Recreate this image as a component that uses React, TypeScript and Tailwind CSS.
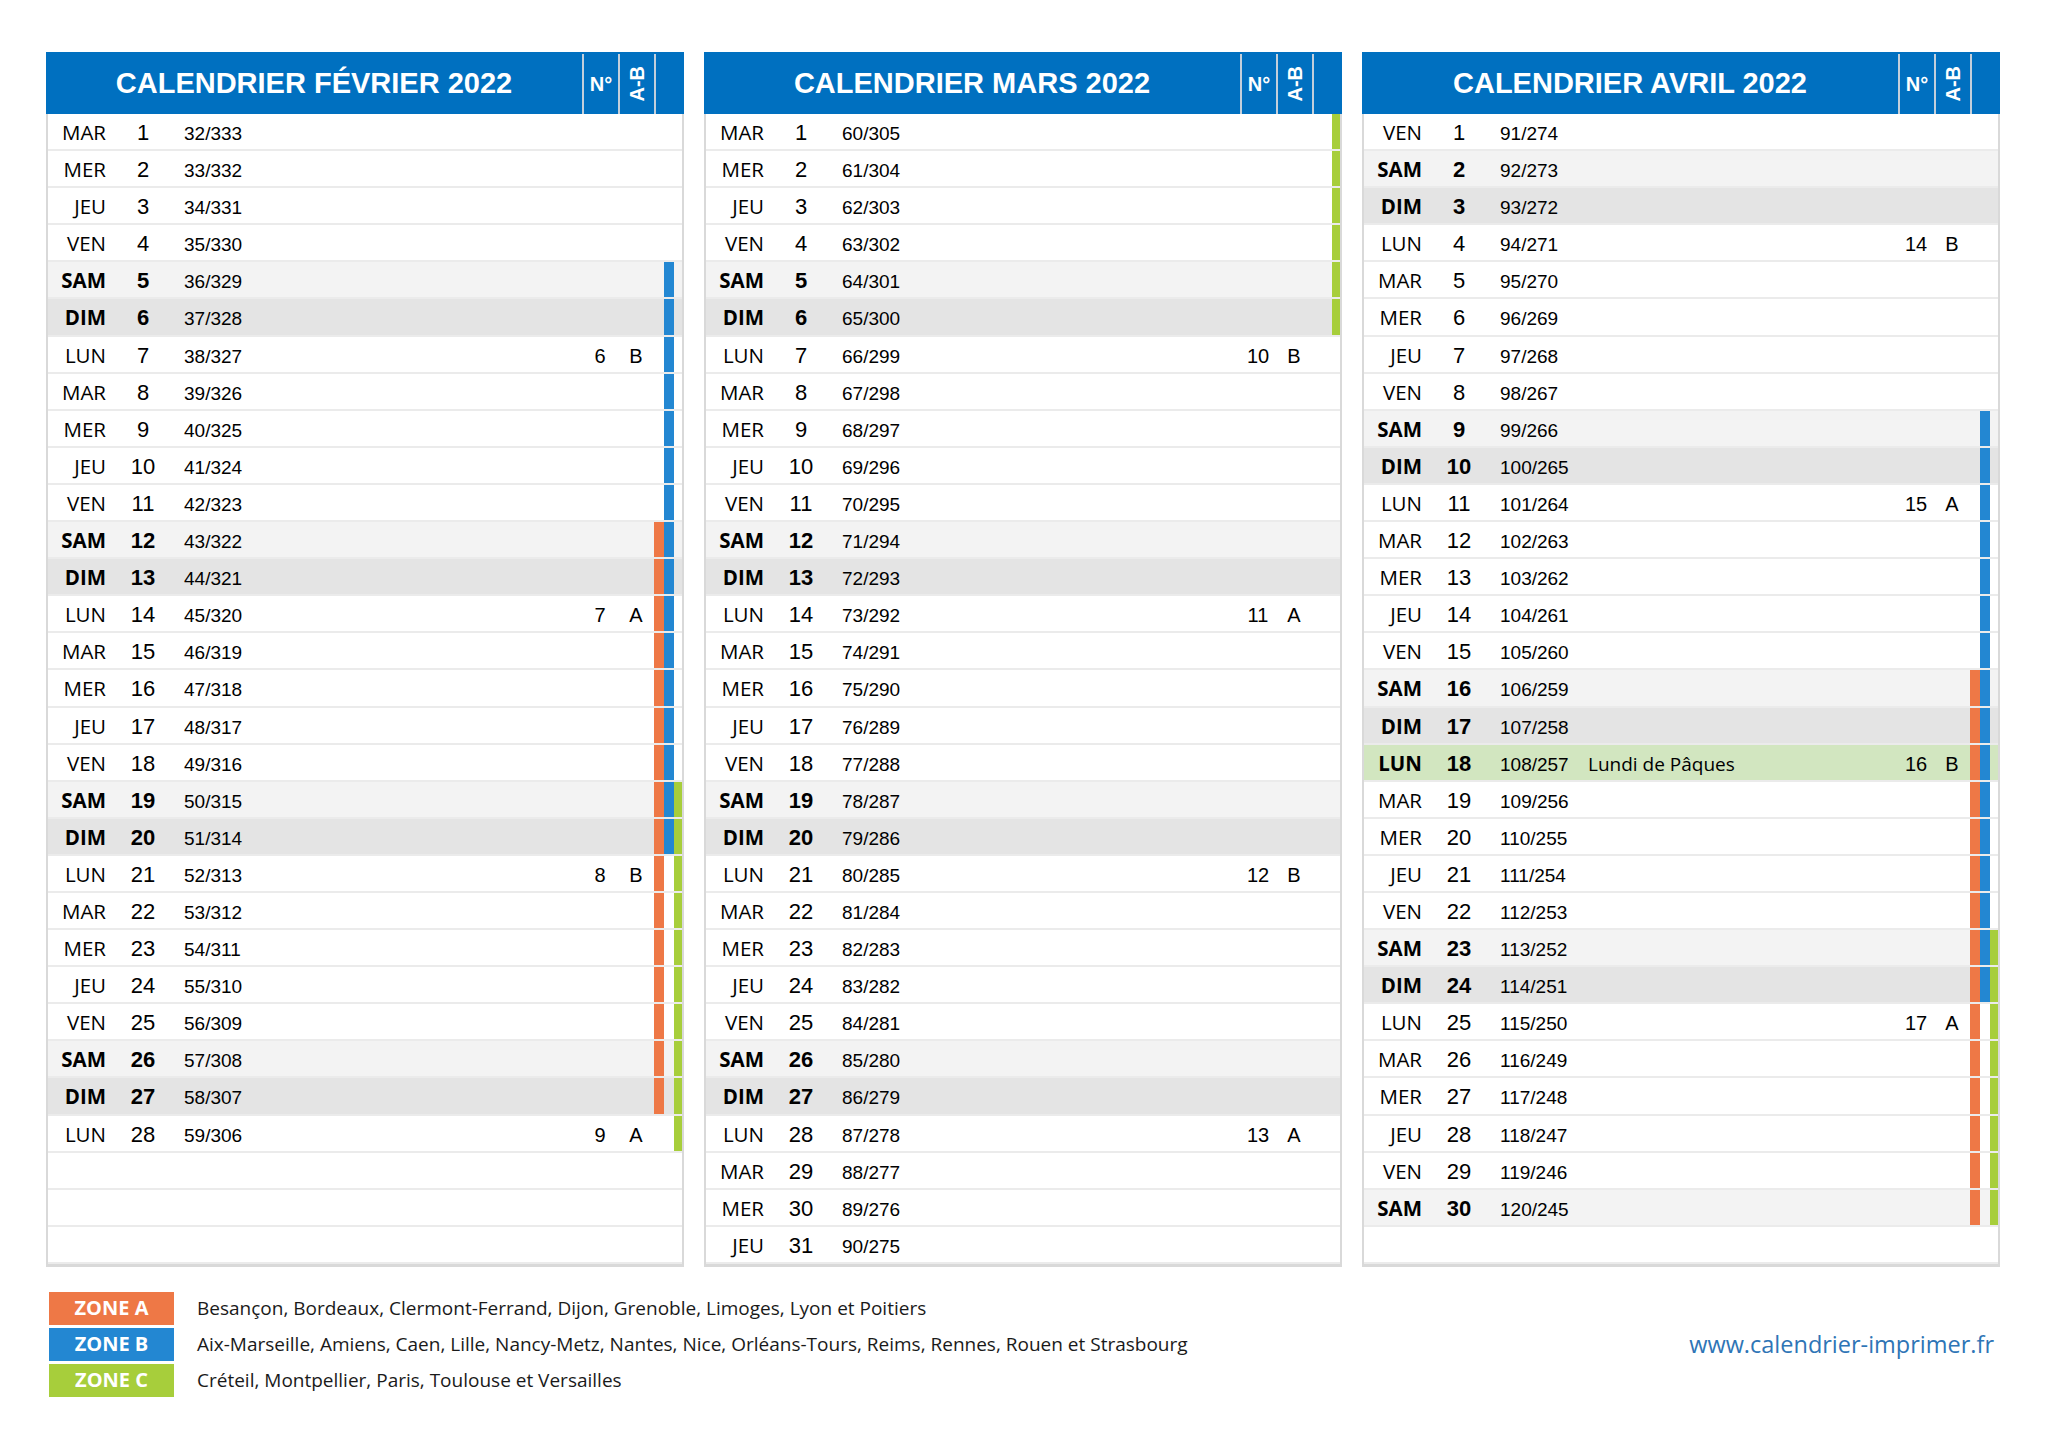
import { clsx } from "clsx";

const WD = ["DIM", "LUN", "MAR", "MER", "JEU", "VEN", "SAM"];

type Range = [number, number] | undefined;

type Month = {
  title: string;
  m: number;
  days: number;
  a?: Range;
  b?: Range;
  c?: Range;
  holidays?: Record<number, string>;
};

const months: Month[] = [
  { title: "CALENDRIER FÉVRIER 2022", m: 1, days: 28, a: [12, 27], b: [5, 20], c: [19, 28] },
  { title: "CALENDRIER MARS 2022", m: 2, days: 31, c: [1, 6] },
  {
    title: "CALENDRIER AVRIL 2022",
    m: 3,
    days: 30,
    a: [16, 30],
    b: [9, 24],
    c: [23, 30],
    holidays: { 18: "Lundi de Pâques" },
  },
];

const zones = [
  { label: "ZONE A", color: "bg-[#ee7846]", cities: "Besançon, Bordeaux, Clermont-Ferrand, Dijon, Grenoble, Limoges, Lyon et Poitiers" },
  {
    label: "ZONE B",
    color: "bg-[#2387d2]",
    cities:
      "Aix-Marseille, Amiens, Caen, Lille, Nancy-Metz, Nantes, Nice, Orléans-Tours, Reims, Rennes, Rouen et Strasbourg",
  },
  { label: "ZONE C", color: "bg-[#a7ce3b]", cities: "Créteil, Montpellier, Paris, Toulouse et Versailles" },
];

const inRange = (r: Range, d: number) => !!r && d >= r[0] && d <= r[1];

function dayOfYear(m: number, d: number) {
  const start = Date.UTC(2022, 0, 1);
  return Math.round((Date.UTC(2022, m, d) - start) / 86400000) + 1;
}

function Row({ month, d }: { month: Month; d: number | null }) {
  if (d === null) {
    return <div className="h-[37.1px] border-b-2 border-[#ebebeb]" />;
  }
  const wd = new Date(2022, month.m, d).getDay();
  const doy = dayOfYear(month.m, d);
  const holiday = month.holidays?.[d];
  const weekend = wd === 0 || wd === 6;
  const bold = weekend || !!holiday;
  const week = wd === 1 ? Math.floor((doy - 3) / 7) + 1 : null;

  return (
    <div
      className={clsx(
        "flex h-[37.1px] items-baseline border-b-2 border-[#ebebeb] pt-[5px] leading-[26px] text-black",
        holiday ? "bg-[#d2e6c0]" : wd === 6 ? "bg-[#f3f3f3]" : wd === 0 ? "bg-[#e4e4e4]" : "bg-white"
      )}
    >
      <div
        className={clsx(
          "w-[58px] text-right font-['Open_Sans',sans-serif] text-[20.5px]",
          bold ? "font-bold" : "font-normal"
        )}
      >
        {WD[wd]}
      </div>
      <div
        className={clsx(
          "w-[74px] text-center font-['Liberation_Sans',Arial,sans-serif] text-[22px]",
          bold ? "font-bold" : "font-normal"
        )}
      >
        {d}
      </div>
      <div className="w-[92px] pl-[4px] font-['Liberation_Sans',Arial,sans-serif] text-[19px]">
        {doy}/{365 - doy}
      </div>
      <div className="flex-1 font-['Open_Sans',sans-serif] text-[19px]">{holiday}</div>
      <div className="w-[36px] text-center font-['Liberation_Sans',Arial,sans-serif] text-[20px]">
        {week}
      </div>
      <div className="w-[36px] text-center font-['Liberation_Sans',Arial,sans-serif] text-[20px]">
        {week ? (week % 2 === 0 ? "B" : "A") : null}
      </div>
      <div className="-mt-[5px] flex w-[28px] self-stretch">
        <div className={clsx("w-[10px]", inRange(month.a, d) && "bg-[#ee7846]")} />
        <div className={clsx("w-[10px]", inRange(month.b, d) && "bg-[#2387d2]")} />
        <div className={clsx("w-[8px]", inRange(month.c, d) && "bg-[#a7ce3b]")} />
      </div>
    </div>
  );
}

function MonthPanel({ month }: { month: Month }) {
  const rows: (number | null)[] = Array.from({ length: 31 }, (_, i) => (i < month.days ? i + 1 : null));
  return (
    <div className="w-[638px]">
      <div className="flex h-[62px] bg-[#0070c0] text-white">
        <div className="flex w-[536px] items-center justify-center pt-[2px] font-['Liberation_Sans',Arial,sans-serif] text-[29px] font-bold">
          {month.title}
        </div>
        <div className="mt-[2px] flex w-[36px] items-center justify-center border-l-2 border-[#c3cfdb] font-['Liberation_Sans',Arial,sans-serif] text-[20px] font-bold">
          N°
        </div>
        <div className="mt-[2px] flex w-[36px] items-center justify-center border-l-2 border-[#c3cfdb]">
          <span className="rotate-180 font-['Liberation_Sans',Arial,sans-serif] text-[20px] font-bold [writing-mode:vertical-rl]">
            A-B
          </span>
        </div>
        <div className="mt-[2px] w-[30px] border-l-2 border-[#c3cfdb]" />
      </div>
      <div className="border-x-2 border-b-[3px] border-[#d9d9d9]">
        {rows.map((d, i) => (
          <Row key={i} month={month} d={d} />
        ))}
      </div>
    </div>
  );
}

export default function App() {
  return (
    <div className="h-[1448px] w-[2048px] bg-white pl-[46px] pt-[52px]">
      <div className="flex gap-[20px]">
        {months.map((m) => (
          <MonthPanel key={m.title} month={m} />
        ))}
      </div>

      <div className="mt-[25px] flex w-[1954px] items-center justify-between pl-[3px] pr-[6px]">
        <div className="flex flex-col gap-[3px]">
          {zones.map((z) => (
            <div key={z.label} className="flex items-center">
              <div
                className={clsx(
                  "flex h-[33px] w-[125px] items-center justify-center font-['Open_Sans',sans-serif] text-[20px] font-bold text-white",
                  z.color
                )}
              >
                {z.label}
              </div>
              <span className="ml-[23px] font-['Open_Sans',sans-serif] text-[19px] text-[#1a1a1a]">
                {z.cities}
              </span>
            </div>
          ))}
        </div>
        <span className="font-['Open_Sans',sans-serif] text-[23.5px] text-[#2e75b6]">
          www.calendrier-imprimer.fr
        </span>
      </div>
    </div>
  );
}
